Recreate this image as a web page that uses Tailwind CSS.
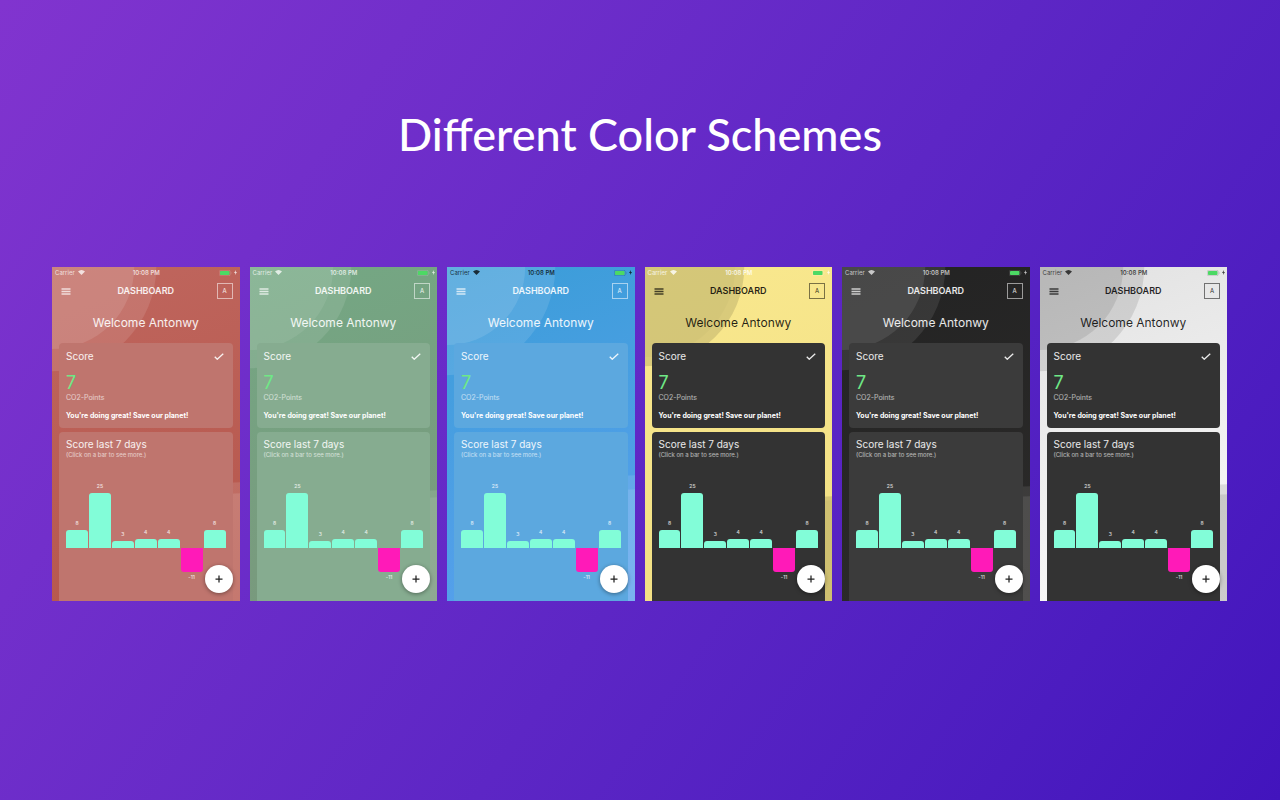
<!DOCTYPE html>
<html lang="en">
<head>
<meta charset="utf-8">
<title>Different Color Schemes</title>
<script src="https://cdn.jsdelivr.net/npm/@tailwindcss/browser@4"></script>
</head>
<body class="min-h-screen bg-linear-125 from-[#8134cf] to-[#4214bd] font-['Inter',sans-serif]">
<main class="flex flex-col gap-[100px] pt-[102px] pb-16">
  <h1 class="text-center font-['Lato',sans-serif] text-[45px] leading-[65px] font-medium text-white">Different Color Schemes</h1>
  <div id="phones" class="grid grid-cols-6 gap-[10px] pl-[52px] pr-[53px]"></div>
</main>

<template id="phone">
  <section class="relative isolate flex aspect-[375/667] flex-col overflow-hidden">
    <svg data-backdrop class="absolute inset-0 -z-10 h-full w-full" viewBox="0 0 187 333" preserveAspectRatio="none" aria-hidden="true"></svg>
    <div data-status class="grid h-[11px] shrink-0 grid-cols-3 items-center pr-[2px] pl-[3px] text-[6px] leading-[10px]">
      <span class="flex items-center gap-[3px]">Carrier
        <svg class="h-[5px] w-[7px]" viewBox="0 0 14 10" fill="currentColor" aria-hidden="true"><path d="M7 10 0 3Q7-3 14 3Z"/></svg>
      </span>
      <span class="text-center font-semibold whitespace-nowrap">10:08 PM</span>
      <span class="flex items-center justify-end gap-[2px]">
        <svg class="h-[6px] w-[13px]" viewBox="0 0 26 12" aria-hidden="true"><rect x=".5" y=".5" width="22" height="11" rx="3" fill="none" stroke="currentColor" opacity=".4"/><rect x="2" y="2" width="19" height="8" rx="1.5" fill="#4cd964"/><path d="M24 4v4q1.500-2 0-4" fill="currentColor" opacity=".5"/></svg>
        <svg class="h-[5px] w-[3px]" viewBox="0 0 6 10" fill="currentColor" aria-hidden="true"><path d="M4 0 0 6h2.500L2 10l4-6H3.500Z"/></svg>
      </span>
    </div>
    <header data-ink class="grid h-[26px] shrink-0 grid-cols-[16px_1fr_16px] items-center px-[7px]">
      <button aria-label="Menu" class="flex h-4 w-4 items-center pl-[2px]">
        <svg class="h-[7px] w-[10px]" viewBox="0 0 20 14" fill="none" stroke="currentColor" stroke-width="2.600" opacity=".8" aria-hidden="true"><path d="M1 2h18M1 7h18M1 12h18"/></svg>
      </button>
      <h2 class="text-center text-[9px] leading-4 font-semibold">DASHBOARD</h2>
      <button aria-label="Account" class="flex h-4 w-4 items-center justify-center border border-current/60 text-[6px] leading-3">A</button>
    </header>
    <p data-ink class="mt-[9px] mb-[10px] shrink-0 text-center text-[12px] leading-5 whitespace-nowrap">Welcome Antonwy</p>
    <div class="flex flex-1 flex-col gap-[4px] px-[7px] text-white/90">
      <article data-card class="h-[85px] shrink-0 rounded-[4px] px-[7px] pt-[7px]">
        <div class="flex h-[13px] items-center justify-between pr-[2px]">
          <h3 class="text-[10px] leading-[13px]">Score</h3>
          <svg class="h-[7px] w-[10px]" viewBox="0 0 20 14" fill="none" stroke="currentColor" stroke-width="2.600" aria-hidden="true"><path d="m1.500 7.500 5 5L18.500 1.500"/></svg>
        </div>
        <p class="mt-[10px] text-[18px] leading-5 text-[#6fe886]">7</p>
        <p class="text-[7px] leading-[9px] text-white/65">CO2-Points</p>
        <p class="mt-[9px] text-[7px] leading-[9px] font-bold whitespace-nowrap text-white">You're doing great! Save our planet!</p>
      </article>
      <article data-card class="flex-1 rounded-t-[4px] px-[7px] pt-[6px]">
        <h3 class="text-[10px] leading-[13px]">Score last 7 days</h3>
        <p class="text-[6px] leading-[7px] whitespace-nowrap text-white/65">(Click on a bar to see more.)</p>
        <div data-chart class="mt-[22px] grid grid-cols-7 gap-px text-center text-[5px] leading-[7px] font-medium text-white/80"></div>
      </article>
    </div>
    <button aria-label="Add entry" class="absolute right-[7px] bottom-2 flex h-7 w-7 items-center justify-center rounded-full bg-white text-[#222] shadow-[0_1px_4px_rgba(0,0,0,0.4)]">
      <svg class="h-2 w-2" viewBox="0 0 16 16" fill="none" stroke="currentColor" stroke-width="2.500" aria-hidden="true"><path d="M8 1v14M1 8h14"/></svg>
    </button>
  </section>
</template>

<script>
  // tl / br: radii of the two corner discs, outer first; disc: their fills in the same order
  const schemes = [
    { bg: 'bg-linear-160 from-[#bf665e] to-[#b6564b]', disc: ['fill-white/11', 'fill-white/11'], card: 'bg-[#bf756e]', ink: 'text-white/90', status: 'text-white/75', tl: [104, 82], br: [118, 107] },
    { bg: 'bg-linear-160 from-[#74a884] to-[#79977c]', disc: ['fill-white/10', 'fill-white/8'], card: 'bg-[#86ac90]', ink: 'text-white/90', status: 'text-white/75', tl: [101, 83], br: [110, 103] },
    { bg: 'bg-linear-160 from-[#3a9dd8] to-[#58a0ee]', disc: ['fill-white/11', 'fill-white/11'], card: 'bg-[#5ca8df]', ink: 'text-white/90', status: 'text-black/75', tl: [108, 78], br: [125, 111] },
    { bg: 'bg-linear-160 from-[#f9e88e] to-[#f1df83]', disc: ['fill-black/12', 'fill-black/2'], card: 'bg-[#333333]', ink: 'text-black/85', status: 'text-white/80', tl: [99, 90], br: [104, 100] },
    { bg: 'bg-linear-160 from-[#232323] to-[#2c2b2a]', disc: ['fill-white/9', 'fill-white/9'], card: 'bg-[#3b3b3b]', ink: 'text-white/90', status: 'text-white/70', tl: [103, 83], br: [114, 104] },
    { bg: 'bg-linear-160 from-[#e2e2e2] to-[#fbfbfb]', disc: ['fill-black/10', 'fill-black/9'], card: 'bg-[#333333]', ink: 'text-black/85', status: 'text-black/70', tl: [104, 83], br: [116, 106] },
  ];
  const scores = [[8, 18], [25, 55], [3, 7], [4, 9], [4, 9], [-11, 24], [8, 18]];

  const host = document.getElementById('phones');
  for (const s of schemes) {
    const phone = document.getElementById('phone').content.cloneNode(true);
    const add = (el, names) => el.classList.add(...names.split(' '));
    add(phone.querySelector('section'), s.bg);
    add(phone.querySelector('[data-status]'), s.status);
    phone.querySelectorAll('[data-ink]').forEach(el => add(el, s.ink));
    phone.querySelectorAll('[data-card]').forEach(el => add(el, s.card));
    phone.querySelector('[data-backdrop]').innerHTML =
      s.tl.map((r, i) => `<circle class="${s.disc[i]}" cx="0" cy="0" r="${r}"/>`).join('') +
      s.br.map((r, i) => `<circle class="${s.disc[i]}" cx="187" cy="333" r="${r}"/>`).join('');
    phone.querySelector('[data-chart]').innerHTML = scores.map(([v, h]) => v > 0
      ? `<div class="flex h-[68px] flex-col justify-end gap-[3px]"><span>${v}</span><div class="rounded-t-[3px] bg-[#82fdd8]" style="height:${h}px"></div></div>`
      : `<div class="flex flex-col gap-[2px] pt-[68px]"><div class="rounded-b-[3px] bg-[#ff1ab8]" style="height:${h}px"></div><span>${v}</span></div>`).join('');
    host.append(phone);
  }
</script>
</body>
</html>
